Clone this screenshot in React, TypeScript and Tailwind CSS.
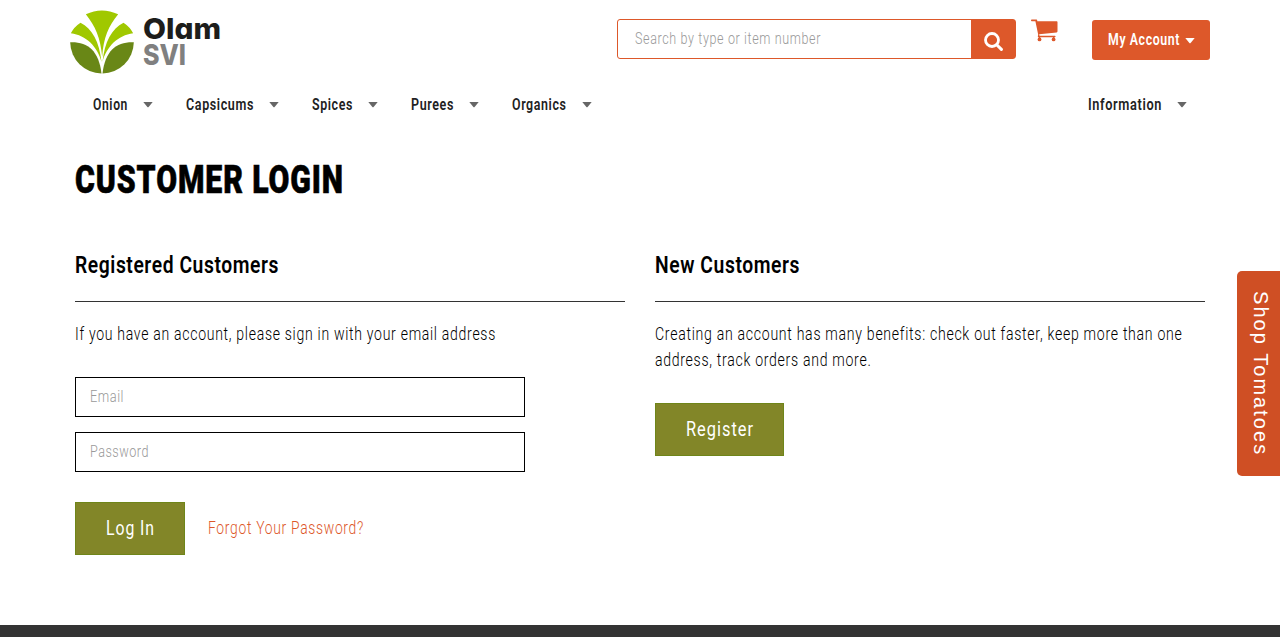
import { useLayoutEffect, useRef, useState } from "react";

/** One line of condensed text, squeezed horizontally to the given width. */
function Line({ text, width, className = "" }: { text: string; width: number; className?: string }) {
  const ref = useRef<HTMLSpanElement>(null);
  const [scale, setScale] = useState(1);
  useLayoutEffect(() => {
    if (ref.current) setScale(width / parseFloat(getComputedStyle(ref.current).width));
  }, [text, width]);
  return (
    <span className="block shrink-0" style={{ width }}>
      <span
        ref={ref}
        className={`inline-block origin-left whitespace-nowrap align-top ${className}`}
        style={{ transform: `scaleX(${scale})` }}
      >
        {text}
      </span>
    </span>
  );
}

function Caret({ className = "" }: { className?: string }) {
  return (
    <svg className={`shrink-0 ${className}`} viewBox="0 0 10 6" fill="currentColor">
      <path d="M0.3 0h9.4L5.6 5a.8.8 0 0 1-1.2 0Z" />
    </svg>
  );
}

function Logo() {
  return (
    <a href="#" className="flex h-[64px] gap-[9px]">
      <svg className="mt-[0.500px] h-[64px] w-[64px]" viewBox="29.5 28 192 192">
        <path fill="#a0c800" d="M77 41Q125 18 174 41C145 76 130 112 126 168C121 112 105 76 77 41Z" />
        <path fill="#a0c800" d="M61 66C96 83 118 124 124 184C112 138 78 104 32 98Q41 79 61 66Z" />
        <path fill="#a0c800" d="M190 66C155 83 133 124 127 184C139 138 173 104 219 98Q210 79 190 66Z" />
        <path fill="#698716" d="M30 125C82 123 116 150 124 218.500A95.500 95.500 0 0 1 30 125Z" />
        <path fill="#698716" d="M221 125C169 123 135 150 127 218.500A95.500 95.500 0 0 0 221 125Z" />
      </svg>
      <span className="flex flex-col pt-[7px] font-['Inter',sans-serif] text-[29px] leading-[25.500px] font-extrabold">
        <Line text="Olam" width={78} className="text-[#1d1d1b] [font-feature-settings:'cv11']" />
        <Line text="SVI" width={43} className="text-[#808080]" />
      </span>
    </a>
  );
}

const menu = [
  { label: "Onion", width: 35 },
  { label: "Capsicums", width: 68 },
  { label: "Spices", width: 41 },
  { label: "Purees", width: 43 },
  { label: "Organics", width: 54.5 },
];

function MenuItem({ label, width }: { label: string; width: number }) {
  return (
    <a href="#" className="flex items-center gap-[15px] text-[#222]">
      <Line text={label} width={width} className="text-[16px] font-semibold tracking-[0.05em]" />
      <Caret className="h-[6px] w-[10px] text-[#666]" />
    </a>
  );
}

function Field({ label, width, type }: { label: string; width: number; type: string }) {
  return (
    <label className="relative block h-[40px] w-[450px]">
      <input type={type} aria-label={label} className="h-full w-full border border-black px-[14px]" />
      <span className="pointer-events-none absolute top-[8px] left-[15px] text-[16px] leading-6 font-light tracking-[0.04em] text-[#999]">
        <Line text={label} width={width} />
      </span>
    </label>
  );
}

export default function App() {
  return (
    <div className="flex h-[637px] flex-col overflow-hidden bg-white font-['Roboto',sans-serif] text-black">
      <header className="mx-[70px] flex h-[82px] items-start pt-[9px]">
        <Logo />
        <div className="mt-[10px] ml-auto flex h-[40px] w-[399px] rounded-[3px] border border-[#dd582a]">
          <label className="relative block flex-1">
            <input aria-label="Search" className="h-full w-full px-4 outline-none" />
            <span className="pointer-events-none absolute top-[7px] left-[17px] text-[16px] leading-6 font-light tracking-[0.05em] text-[#999]">
              <Line text="Search by type or item number" width={186} />
            </span>
          </label>
          <button aria-label="Search" className="flex w-[44px] items-center justify-center bg-[#dd582a] pt-[4px] text-white">
            <svg className="h-[19px] w-[19px]" viewBox="0 0 19 19" fill="none" stroke="currentColor">
              <circle cx="8" cy="8" r="6.500" strokeWidth="2.800" />
              <path d="m12.700 12.700 4.700 4.700" strokeWidth="3" strokeLinecap="round" />
            </svg>
          </button>
        </div>
        <a href="#" aria-label="Cart" className="mt-[10px] ml-[15px] text-[#dd582a]">
          <svg className="h-[23px] w-[27px]" viewBox="0 0 27 23" fill="currentColor">
            <path d="M.7.5h4.500c.7 0 .9.400 1 1l.1.800h19.200c.7 0 1 .4 1 1v9c0 .6-.3 1-.9 1.100L8.200 15.300l.3 1.400h15.200c1.200 0 1.200 1.600 0 1.600H7.800c-1 0-1.100-.6-.9-1.300l.3-1.300L4.400 2.300H.7C-.2 2.300-.2.500.7.500Z" />
            <circle cx="8.500" cy="20.400" r="1.900" />
            <circle cx="22.600" cy="20.400" r="1.900" />
            <path d="M7.700 17.500h1.500v2H7.700zM21.900 17.500h1.500v2h-1.500z" />
          </svg>
        </a>
        <button className="mt-[11px] ml-[34px] flex h-[40px] w-[118px] items-center gap-[5px] rounded-[3px] bg-[#dd582a] pl-[16px] text-white">
          <Line text="My Account" width={72} className="text-[16px] font-semibold tracking-[0.05em]" />
          <Caret className="mt-px h-[6px] w-[10px]" />
        </button>
      </header>

      <nav className="mx-[93px] flex h-[45px] items-center gap-[33px]">
        {menu.map((m) => (
          <MenuItem key={m.label} {...m} />
        ))}
        <span className="ml-auto">
          <MenuItem label="Information" width={74} />
        </span>
      </nav>

      <main className="mx-[75px] flex-1">
        <h1 className="mt-[29px] h-[48px] text-[38px] leading-[48px] font-black tracking-[0.03em] [-webkit-text-stroke:0.600px_black]">
          <Line text="CUSTOMER LOGIN" width={269} />
        </h1>
        <div className="mt-[46px] grid grid-cols-2 gap-[30px]">
          <section>
            <h2 className="h-[52px] border-b border-[#333] pt-px text-[23px] leading-[30px] font-semibold tracking-[0.03em]">
              <Line text="Registered Customers" width={204} />
            </h2>
            <p className="mt-[19px] text-[19px] leading-[26px] font-light tracking-[0.05em]">
              <Line text="If you have an account, please sign in with your email address" width={421} />
            </p>
            <form className="mt-[30px] flex flex-col gap-[15px]">
              <Field label="Email" width={34} type="email" />
              <Field label="Password" width={59} type="password" />
              <div className="mt-[15px] flex items-center gap-[23px]">
                <button type="button" className="flex h-[53px] w-[110px] items-center border border-[#6f8519] bg-[#828628] pb-[2px] pl-[30px] text-[20px] tracking-[0.06em] text-white">
                  <Line text="Log In" width={49} />
                </button>
                <a href="#" className="pb-[2px] text-[19px] leading-[26px] font-light tracking-[0.05em] text-[#dd582a]">
                  <Line text="Forgot Your Password?" width={156} />
                </a>
              </div>
            </form>
          </section>
          <section>
            <h2 className="h-[52px] border-b border-[#333] pt-px text-[23px] leading-[30px] font-semibold tracking-[0.03em]">
              <Line text="New Customers" width={145} />
            </h2>
            <p className="mt-[19px] text-[19px] leading-[26px] font-light tracking-[0.05em]">
              <Line text="Creating an account has many benefits: check out faster, keep more than one" width={527.5} />
              <Line text="address, track orders and more." width={216.5} />
            </p>
            <button className="mt-[30px] flex h-[53px] w-[129px] items-center border border-[#6f8519] bg-[#828628] pb-[2px] pl-[30px] text-[20px] tracking-[0.06em] text-white">
              <Line text="Register" width={68} />
            </button>
          </section>
        </div>
      </main>

      <footer className="h-[12px] bg-[#333]" />

      <a
        href="#"
        className="absolute top-[271px] right-0 flex h-[205px] w-[43px] items-center rounded-l-[5px] bg-[#cf4f24] pt-[20px] pl-[4px] font-['Liberation_Sans',sans-serif] text-[20px] leading-[43px] tracking-[2.050px] text-white [writing-mode:vertical-rl]"
      >
        Shop Tomatoes
      </a>
    </div>
  );
}
